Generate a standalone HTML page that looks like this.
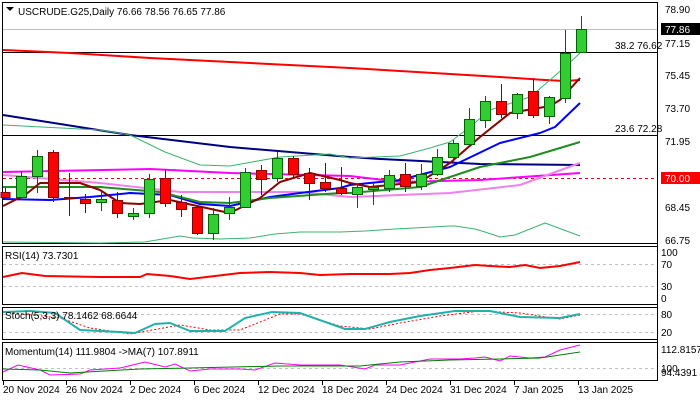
<!DOCTYPE html><html><head><style>body{margin:0;background:#fff}svg{display:block;font-family:"Liberation Sans",sans-serif}</style></head><body>
<svg width="700" height="400" viewBox="0 0 700 400" xmlns="http://www.w3.org/2000/svg">
<rect width="700" height="400" fill="#fff"/>
<g fill="none" stroke="#000" stroke-width="1">
<rect x="2.5" y="2.5" width="655" height="241"/>
<rect x="2.5" y="246.5" width="655" height="58"/>
<rect x="2.5" y="307.5" width="655" height="32"/>
<rect x="2.5" y="342.5" width="655" height="38"/>
</g>
<line x1="3" y1="29.5" x2="657" y2="29.5" stroke="#c0c0c0"/>
<line x1="3" y1="52.5" x2="657" y2="52.5" stroke="#000"/>
<line x1="3" y1="135.5" x2="657" y2="135.5" stroke="#000"/>
<line x1="3" y1="178.5" x2="657" y2="178.5" stroke="#f00" stroke-dasharray="3,3"/>
<g fill="none" stroke-linejoin="round">
<polyline stroke="#f00" stroke-width="2" points="3,50 70,53 150,58 250,63 350,68 450,74 500,77 545,80 565,81 580,80"/>
<polyline stroke="#000080" stroke-width="2" points="3,115 130,135 230,147 350,157 380,159 480,164 580,165"/>
<polyline stroke="#3cb371" stroke-width="1" points="3,125 100,130 130,135 165,152 200,165 230,166 280,157 330,154 350,158 400,156 430,148 450,142 470,127 490,110 530,97 550,80 565,67 580,53"/>
<polyline stroke="#3cb371" stroke-width="1" points="3,242 100,243 145,242 180,236 193,238 220,239 250,238 275,234 300,232 340,232 365,231 395,229 450,226 455,226 475,229 485,232 500,237 515,235 545,223 580,236"/>
<polyline stroke="#ff00ff" stroke-width="2" points="3,172 150,169 230,173 350,176 400,182 480,180 580,173"/>
<polyline stroke="#ee82ee" stroke-width="2" points="3,175 100,183 180,192 300,192 350,197 450,193 520,185 580,163"/>
<polyline stroke="#0000ff" stroke-width="2" points="3,199 50,200 90,197 130,193 170,195 200,204 230,206 270,197 300,193 340,188 350,185 400,180 450,167 500,143 540,133 555,127 580,103"/>
<polyline stroke="#228b22" stroke-width="2" points="3,187 100,187 160,192 200,202 230,203 270,198 340,193 350,193 420,187 480,167 530,157 580,142"/>
<polyline stroke="#8b0000" stroke-width="2" points="3,206 25,195 40,183 80,183 100,190 120,203 140,204 170,200 220,211 230,213 260,198 280,182 310,173 340,180 350,183 370,187 420,182 450,163 480,137 510,113 550,106 560,100 580,78"/>
</g>
<g stroke-width="1">
<g stroke="#8b0000" fill="#f00">
<line x1="5.5" y1="188" x2="5.5" y2="200"/><rect x="1" y="192.5" width="9" height="5"/>
<line x1="53.5" y1="150" x2="53.5" y2="202"/><rect x="48.5" y="152.5" width="10" height="45"/>
<line x1="69.5" y1="173" x2="69.5" y2="216"/><rect x="64.5" y="197.5" width="10" height="1"/>
<line x1="85.5" y1="194" x2="85.5" y2="213"/><rect x="80.5" y="199.5" width="10" height="4"/>
<line x1="117.5" y1="192" x2="117.5" y2="218"/><rect x="112.5" y="200.5" width="10" height="13"/>
<line x1="165.5" y1="169" x2="165.5" y2="207"/><rect x="160.5" y="178.5" width="10" height="25"/>
<line x1="181.5" y1="195" x2="181.5" y2="217"/><rect x="176.5" y="202.5" width="10" height="7"/>
<line x1="197.5" y1="205" x2="197.5" y2="235"/><rect x="192.5" y="207.5" width="10" height="26"/>
<line x1="261.5" y1="165" x2="261.5" y2="195"/><rect x="256.5" y="170.5" width="10" height="9"/>
<line x1="293.5" y1="156" x2="293.5" y2="177"/><rect x="288.5" y="158.5" width="10" height="16"/>
<line x1="309.5" y1="168" x2="309.5" y2="200"/><rect x="304.5" y="173.5" width="10" height="10"/>
<line x1="325.5" y1="163" x2="325.5" y2="192"/><rect x="320.5" y="182.5" width="10" height="6"/>
<line x1="341.5" y1="167" x2="341.5" y2="195"/><rect x="336.5" y="188.5" width="10" height="5"/>
<line x1="405.5" y1="163" x2="405.5" y2="192"/><rect x="400.5" y="174.5" width="10" height="12"/>
<line x1="501.5" y1="84" x2="501.5" y2="118"/><rect x="496.5" y="101.5" width="10" height="13"/>
<line x1="533.5" y1="78" x2="533.5" y2="118"/><rect x="528.5" y="91.5" width="10" height="24"/>
</g>
<g stroke="#006400" fill="#32cd32">
<line x1="21.5" y1="171" x2="21.5" y2="200"/><rect x="16.5" y="176.5" width="10" height="21"/>
<line x1="37.5" y1="150" x2="37.5" y2="193"/><rect x="32.5" y="156.5" width="10" height="20"/>
<line x1="101.5" y1="192" x2="101.5" y2="211"/><rect x="96.5" y="199.5" width="10" height="3"/>
<line x1="133.5" y1="208" x2="133.5" y2="220"/><rect x="128.5" y="213.5" width="10" height="3"/>
<line x1="149.5" y1="174" x2="149.5" y2="218"/><rect x="144.5" y="179.5" width="10" height="34"/>
<line x1="213.5" y1="208" x2="213.5" y2="240"/><rect x="208.5" y="214.5" width="10" height="19"/>
<line x1="229.5" y1="197" x2="229.5" y2="220"/><rect x="224.5" y="207.5" width="10" height="6"/>
<line x1="245.5" y1="168" x2="245.5" y2="208"/><rect x="240.5" y="172.5" width="10" height="35"/>
<line x1="277.5" y1="152" x2="277.5" y2="182"/><rect x="272.5" y="158.5" width="10" height="20"/>
<line x1="357.5" y1="183" x2="357.5" y2="208"/><rect x="352.5" y="187.5" width="10" height="7"/>
<line x1="373.5" y1="183" x2="373.5" y2="205"/><rect x="368.5" y="187.5" width="10" height="2"/>
<line x1="389.5" y1="170" x2="389.5" y2="192"/><rect x="384.5" y="175.5" width="10" height="13"/>
<line x1="421.5" y1="164" x2="421.5" y2="190"/><rect x="416.5" y="174.5" width="10" height="12"/>
<line x1="437.5" y1="149" x2="437.5" y2="176"/><rect x="432.5" y="157.5" width="10" height="17"/>
<line x1="453.5" y1="140" x2="453.5" y2="163"/><rect x="448.5" y="143.5" width="10" height="14"/>
<line x1="469.5" y1="108" x2="469.5" y2="145"/><rect x="464.5" y="119.5" width="10" height="25"/>
<line x1="485.5" y1="96" x2="485.5" y2="128"/><rect x="480.5" y="101.5" width="10" height="19"/>
<line x1="517.5" y1="93" x2="517.5" y2="119"/><rect x="512.5" y="94.5" width="10" height="19"/>
<line x1="549.5" y1="96" x2="549.5" y2="124"/><rect x="544.5" y="97.5" width="10" height="19"/>
<line x1="565.5" y1="30" x2="565.5" y2="103"/><rect x="560.5" y="53.5" width="10" height="45"/>
<line x1="581.5" y1="16" x2="581.5" y2="52"/><rect x="576.5" y="29.5" width="10" height="23"/>
</g>
</g>
<rect x="658" y="0" width="42" height="400" fill="#fff"/>
<line x1="657.5" y1="2" x2="657.5" y2="381" stroke="#000"/>
<line x1="3" y1="264.5" x2="657" y2="264.5" stroke="#c0c0c0" stroke-dasharray="3,3"/>
<line x1="3" y1="286.5" x2="657" y2="286.5" stroke="#c0c0c0" stroke-dasharray="3,3"/>
<polyline fill="none" stroke="#f00" stroke-width="2" points="3,277 22,273 45,276 100,277 140,277 147,274 170,276 190,279 215,276 240,273 270,272 300,273 320,275 350,274 390,274 410,273 430,270 450,268 475,265 490,266 510,267 525,265 540,268 560,266 580,262"/>
<line x1="3" y1="314.5" x2="657" y2="314.5" stroke="#c0c0c0" stroke-dasharray="3,3"/>
<line x1="3" y1="332.5" x2="657" y2="332.5" stroke="#c0c0c0" stroke-dasharray="3,3"/>
<polyline fill="none" stroke="#f00" stroke-width="1" stroke-dasharray="2,2" points="5,312 60,318 90,328 130,334 180,325 210,330 240,330 280,314 300,314 340,326 370,329 400,323 440,316 480,311 520,313 560,319 580,315"/>
<polyline fill="none" stroke="#20b2aa" stroke-width="2" points="3,312 30,311 55,313 80,330 120,332 135,333 155,324 170,323 190,331 225,331 245,318 272,312 300,313 345,329 365,329 390,322 420,316 455,311 490,311 520,317 560,318 580,314"/>
<line x1="3" y1="368.5" x2="657" y2="368.5" stroke="#c0c0c0" stroke-dasharray="3,3"/>
<polyline fill="none" stroke="#ff00ff" stroke-width="1" points="3,372 18,365 40,370 50,375 80,374 90,370 120,368 145,362 165,367 175,364 190,371 210,369 240,369 255,370 275,363 300,365 340,365 365,369 375,365 400,365 430,359 460,359 475,358 485,357 500,361 510,356 530,358 545,357 560,350 580,345"/>
<polyline fill="none" stroke="#008000" stroke-width="1" points="3,369 40,370 70,373 140,369 190,368 280,366 360,366 400,362 450,360 500,359 540,358 560,355 580,352"/>
<g font-size="10" fill="#000">
<path d="M6 7h8l-4 4z" fill="#000"/>
<text x="18" y="15">USCRUDE.G25,Daily  76.66 78.56 76.65 77.86</text>
<text x="615" y="49">38.2 76.62</text>
<text x="615" y="132">23.6 72.28</text>
<text x="5" y="259">RSI(14) 73.7301</text>
<text x="5" y="319">Stoch(5,3,3) 78.1462 68.6644</text>
<text x="5" y="355">Momentum(14) 111.9804  -&gt;MA(7) 107.8911</text>
<text x="665" y="13">78.90</text>
<rect x="661" y="23" width="39" height="12" fill="#000"/>
<text x="665" y="33" fill="#fff">77.86</text>
<text x="665" y="47">77.15</text>
<text x="665" y="79">75.45</text>
<text x="665" y="112">73.70</text>
<text x="665" y="145">71.95</text>
<rect x="661" y="172" width="39" height="12" fill="#f00"/>
<text x="665" y="182" fill="#fff">70.00</text>
<text x="665" y="211">68.45</text>
<text x="665" y="244">66.75</text>
<text x="661" y="256">100</text>
<text x="661" y="268">70</text>
<text x="661" y="290">30</text>
<text x="661" y="302">0</text>
<text x="661" y="318">80</text>
<text x="661" y="336">20</text>
<text x="661" y="353">112.8157</text>
<text x="661" y="372">100</text>
<text x="661" y="376">94.4391</text>
<text x="3" y="393">20 Nov 2024</text>
<text x="66" y="393">26 Nov 2024</text>
<text x="130" y="393">2 Dec 2024</text>
<text x="194" y="393">6 Dec 2024</text>
<text x="258" y="393">12 Dec 2024</text>
<text x="322" y="393">18 Dec 2024</text>
<text x="386" y="393">24 Dec 2024</text>
<text x="450" y="393">31 Dec 2024</text>
<text x="514" y="393">7 Jan 2025</text>
<text x="578" y="393">13 Jan 2025</text>
</g>
<g stroke="#000"><line x1="3.5" y1="381" x2="3.5" y2="385"/><line x1="66.5" y1="381" x2="66.5" y2="385"/><line x1="130.5" y1="381" x2="130.5" y2="385"/><line x1="194.5" y1="381" x2="194.5" y2="385"/><line x1="258.5" y1="381" x2="258.5" y2="385"/><line x1="322.5" y1="381" x2="322.5" y2="385"/><line x1="386.5" y1="381" x2="386.5" y2="385"/><line x1="450.5" y1="381" x2="450.5" y2="385"/><line x1="514.5" y1="381" x2="514.5" y2="385"/><line x1="578.5" y1="381" x2="578.5" y2="385"/></g>
</svg>
</body></html>
